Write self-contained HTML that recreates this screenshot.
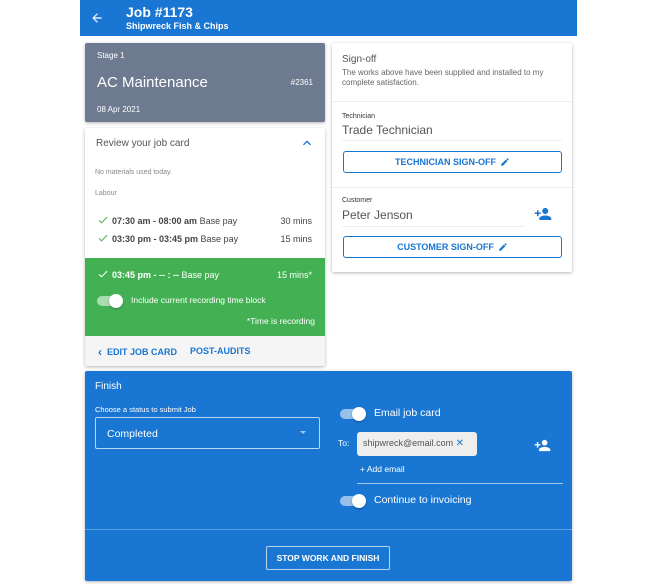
<!DOCTYPE html>
<html><head><style>
*{box-sizing:border-box;margin:0;padding:0}
body{width:658px;height:584px;background:#fff;font-family:"Liberation Sans",sans-serif;position:relative;overflow:hidden;color:#333}
.a{position:absolute}
.hdr{left:80px;top:0;width:497px;height:36px;background:#1976d2;color:#fff}
.card{background:#fff;box-shadow:0 1px 3px rgba(0,0,0,.3);border-radius:2px}
.btn{position:absolute;border:1px solid #1976d2;border-radius:3px;color:#1976d2;font-size:9px;font-weight:bold;display:flex;align-items:center;justify-content:center;gap:4px}
.sw{position:absolute;width:24px;height:10px;border-radius:5px;background:rgba(255,255,255,.55)}
.sw::after{content:"";position:absolute;right:-2px;top:-2px;width:14px;height:14px;border-radius:50%;background:#fff;box-shadow:0 1px 2px rgba(0,0,0,.3)}
.ck{display:inline-block;vertical-align:-2px;margin-right:3px}
</style></head><body>
<div class="a hdr">
 <svg class="a" style="left:10px;top:11px" width="14" height="14" viewBox="0 0 24 24"><path d="M20 11H7.8l5.6-5.6L12 4l-8 8 8 8 1.4-1.4L7.8 13H20z" fill="#fff"/></svg>
 <div class="a" style="left:46px;top:4px;font-size:14px;font-weight:bold">Job #1173</div>
 <div class="a" style="left:46px;top:21px;font-size:9px;font-weight:bold">Shipwreck Fish &amp; Chips</div>
</div>

<div class="a card" style="left:85px;top:43px;width:240px;height:79px;background:#6e7a90;color:#fff">
 <div class="a" style="left:12px;top:8px;font-size:8px">Stage 1</div>
 <div class="a" style="left:12px;top:31px;font-size:15px">AC Maintenance</div>
 <div class="a" style="right:12px;top:35px;font-size:8px">#2361</div>
 <div class="a" style="left:12px;top:62px;font-size:8px">08 Apr 2021</div>
</div>

<div class="a card" style="left:85px;top:128px;width:240px;height:238px;overflow:hidden">
 <div class="a" style="left:11px;top:10px;font-size:10px;color:#555">Review your job card</div>
 <svg class="a" style="right:10px;top:7px" width="16" height="16" viewBox="0 0 24 24"><path d="M7.4 15.4 12 10.8l4.6 4.6L18 14l-6-6-6 6z" fill="#1976d2"/></svg>
 <div class="a" style="left:10px;top:41px;font-size:7px;color:#888">No materials used today.</div>
 <div class="a" style="left:10px;top:62px;font-size:7px;color:#888">Labour</div>
 <div class="a" style="left:12px;top:86px;font-size:9px;color:#444"><svg class="ck" width="12" height="12" viewBox="0 0 24 24"><path d="M9 16.2 4.8 12l-1.4 1.4L9 19 21 7l-1.4-1.4z" fill="#4caf50"/></svg><b>07:30 am - 08:00 am</b> Base pay</div>
 <div class="a" style="right:13px;top:88px;font-size:9px;color:#444">30 mins</div>
 <div class="a" style="left:12px;top:104px;font-size:9px;color:#444"><svg class="ck" width="12" height="12" viewBox="0 0 24 24"><path d="M9 16.2 4.8 12l-1.4 1.4L9 19 21 7l-1.4-1.4z" fill="#4caf50"/></svg><b>03:30 pm - 03:45 pm</b> Base pay</div>
 <div class="a" style="right:13px;top:106px;font-size:9px;color:#444">15 mins</div>
 <div class="a" style="left:0;top:130px;width:240px;height:78px;background:#43b153;color:#fff">
  <div class="a" style="left:12px;top:10px;font-size:9px"><svg class="ck" width="12" height="12" viewBox="0 0 24 24"><path d="M9 16.2 4.8 12l-1.4 1.4L9 19 21 7l-1.4-1.4z" fill="#fff"/></svg><b>03:45 pm - -- : --</b> Base pay</div>
  <div class="a" style="right:13px;top:12px;font-size:9px">15 mins*</div>
  <div class="sw" style="left:12px;top:38px"></div>
  <div class="a" style="left:46px;top:37px;font-size:8.5px">Include current recording time block</div>
  <div class="a" style="right:10px;top:58px;font-size:8.5px">*Time is recording</div>
 </div>
 <div class="a" style="left:0;top:208px;width:240px;height:30px;background:#f5f5f5;color:#1976d2;font-size:8.5px;font-weight:bold">
  <div class="a" style="left:13px;top:9px;font-size:9px"><span style="font-size:12px;vertical-align:-1px">‹</span>&nbsp;&nbsp;EDIT JOB CARD</div>
  <div class="a" style="left:105px;top:10px;font-size:9px">POST-AUDITS</div>
 </div>
</div>

<div class="a card" style="left:332px;top:43px;width:240px;height:229px">
 <div class="a" style="left:10px;top:11px;font-size:10px;color:#555">Sign-off</div>
 <div class="a" style="left:10px;top:25px;font-size:8px;color:#666;line-height:10px;width:228px">The works above have been supplied and installed to my complete satisfaction.</div>
 <div class="a" style="left:0;top:58px;width:240px;border-top:1px solid #eee"></div>
 <div class="a" style="left:10px;top:70px;font-size:7px;color:#333">Technician</div>
 <div class="a" style="left:10px;top:80px;font-size:12px;color:#555">Trade Technician</div>
 <div class="a" style="left:10px;top:97px;width:220px;border-top:1px solid #eee"></div>
 <div class="btn" style="left:11px;top:108px;width:219px;height:22px">TECHNICIAN SIGN-OFF <svg width="10" height="10" viewBox="0 0 24 24"><path d="M3 17.2V21h3.8L17.8 9.9l-3.7-3.7zM20.7 7c.4-.4.4-1 0-1.4l-2.3-2.3c-.4-.4-1-.4-1.4 0l-1.8 1.8 3.7 3.7z" fill="#1976d2"/></svg></div>
 <div class="a" style="left:0;top:144px;width:240px;border-top:1px solid #eee"></div>
 <div class="a" style="left:10px;top:154px;font-size:7px;color:#333">Customer</div>
 <div class="a" style="left:10px;top:165px;font-size:12px;color:#555">Peter Jenson</div>
 <div class="a" style="left:10px;top:183px;width:183px;border-top:1px solid #eee"></div>
 <svg class="a" style="left:202px;top:162px" width="18" height="18" viewBox="0 0 24 24"><path d="M15 12c2.2 0 4-1.8 4-4s-1.8-4-4-4-4 1.8-4 4 1.8 4 4 4zm-9-2V7H4v3H1v2h3v3h2v-3h3v-2zm9 4c-2.7 0-8 1.3-8 4v2h16v-2c0-2.7-5.3-4-8-4z" fill="#1976d2"/></svg>
 <div class="btn" style="left:11px;top:193px;width:219px;height:22px">CUSTOMER SIGN-OFF <svg width="10" height="10" viewBox="0 0 24 24"><path d="M3 17.2V21h3.8L17.8 9.9l-3.7-3.7zM20.7 7c.4-.4.4-1 0-1.4l-2.3-2.3c-.4-.4-1-.4-1.4 0l-1.8 1.8 3.7 3.7z" fill="#1976d2"/></svg></div>
</div>

<div class="a card" style="left:85px;top:371px;width:487px;height:210px;background:#1976d2;color:#fff">
 <div class="a" style="left:10px;top:10px;font-size:10px">Finish</div>
 <div class="a" style="left:10px;top:34px;font-size:7.5px">Choose a status to submit Job</div>
 <div class="a" style="left:10px;top:46px;width:225px;height:32px;border:1px solid rgba(255,255,255,.7);border-radius:2px">
  <div class="a" style="left:11px;top:10px;font-size:10.5px">Completed</div>
  <div class="a" style="right:13px;top:13px;width:0;height:0;border-left:3px solid transparent;border-right:3px solid transparent;border-top:3px solid rgba(255,255,255,.6)"></div>
 </div>
 <div class="sw" style="left:255px;top:38px"></div>
 <div class="a" style="left:289px;top:36px;font-size:10.5px">Email job card</div>
 <div class="a" style="left:253px;top:67px;font-size:8.5px">To:</div>
 <div class="a" style="left:272px;top:61px;width:120px;height:24px;background:#eee;border-radius:3px;color:#555;font-size:9px;padding:6px 0 0 6px">shipwreck@email.com <span style="color:#1976d2;font-size:10px">✕</span></div>
 <svg class="a" style="left:449px;top:66px" width="17" height="17" viewBox="0 0 24 24"><path d="M15 12c2.2 0 4-1.8 4-4s-1.8-4-4-4-4 1.8-4 4 1.8 4 4 4zm-9-2V7H4v3H1v2h3v3h2v-3h3v-2zm9 4c-2.7 0-8 1.3-8 4v2h16v-2c0-2.7-5.3-4-8-4z" fill="#fff"/></svg>
 <div class="a" style="left:275px;top:93px;font-size:8.5px">+ Add email</div>
 <div class="a" style="left:272px;top:112px;width:206px;border-top:1px solid rgba(255,255,255,.6)"></div>
 <div class="sw" style="left:255px;top:125px"></div>
 <div class="a" style="left:289px;top:123px;font-size:10.5px">Continue to invoicing</div>
 <div class="a" style="left:0;top:158px;width:487px;border-top:1px solid rgba(255,255,255,.3)"></div>
 <div class="a" style="left:181px;top:175px;width:124px;height:24px;border:1px solid rgba(255,255,255,.7);border-radius:2px;font-size:8.5px;font-weight:bold;display:flex;align-items:center;justify-content:center">STOP WORK AND FINISH</div>
</div>
</body></html>
